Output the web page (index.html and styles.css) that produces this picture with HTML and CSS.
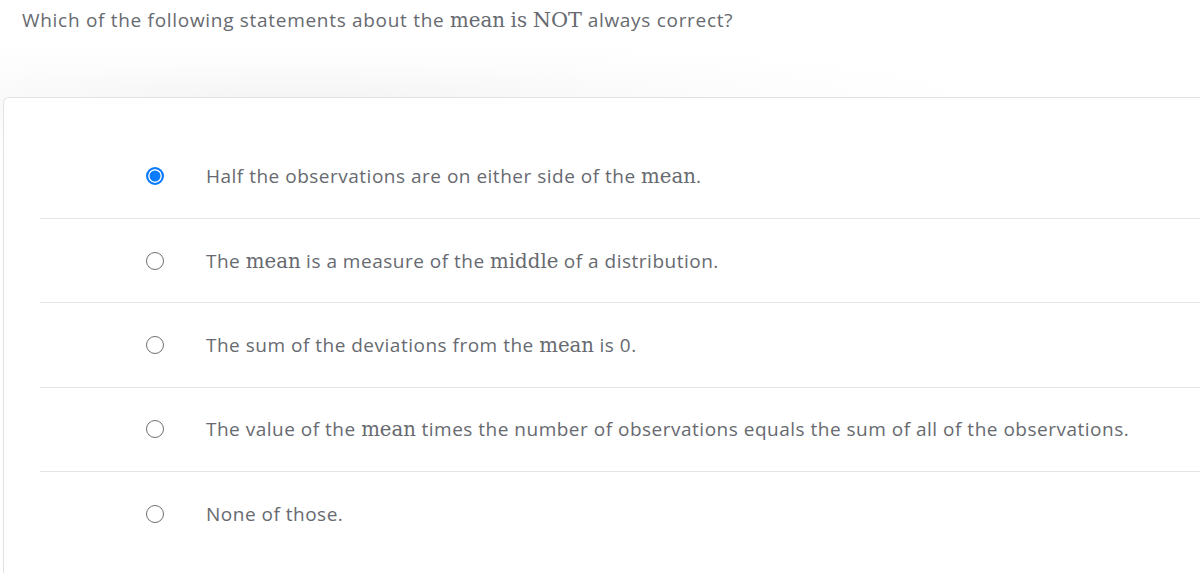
FILE: index.html
```html
<!DOCTYPE html>
<html>
<head>
<meta charset="utf-8">
<link rel="stylesheet" href="styles.css">
</head>
<body>
<div class="page">
  <div class="question">Which of the following statements about the <span class="m">mean</span> <span class="m">is</span> <span class="m big">NOT</span> always correct?</div>
  <div class="card">
    <ul class="options">
      <li class="opt"><span class="radio checked"></span><span class="label">Half the observations are on either side of the <span class="m">mean</span>.</span></li>
      <li class="opt"><span class="radio"></span><span class="label">The <span class="m">mean</span> is a measure of the <span class="m">middle</span> of a distribution.</span></li>
      <li class="opt"><span class="radio"></span><span class="label">The sum of the deviations from the <span class="m">mean</span> is 0.</span></li>
      <li class="opt"><span class="radio"></span><span class="label">The value of the <span class="m">mean</span> times the number of observations equals the sum of all of the observations.</span></li>
      <li class="opt"><span class="radio"></span><span class="label">None of those.</span></li>
    </ul>
  </div>
</div>
</body>
</html>
```

FILE: styles.css
```css
html, body {
  margin: 0;
  padding: 0;
  background: #ffffff;
}
.page {
  width: 1200px;
  height: 573px;
  overflow: hidden;
  font-family: "Open Sans", "Noto Sans", sans-serif;
  color: #676a70;
  background:
    radial-gradient(ellipse 700px 60px at 300px 100px, #f4f4f4 0%, rgba(250,250,250,0.6) 60%, rgba(255,255,255,0) 100%);
}
.question {
  padding: 6px 0 0 22px;
  height: 97px;
  box-sizing: border-box;
  font-size: 19px;
  letter-spacing: 0.7px;
  line-height: 28px;
}
.m {
  font-family: "DejaVu Serif", "Liberation Serif", serif;
  font-size: 1.04em;
  letter-spacing: 0;
}
.m.big {
  font-size: 1.1em;
}
.card {
  margin-left: 3px;
  border: 1px solid #e2e2e2;
  border-right: none;
  border-radius: 6px 0 0 0;
  background: #fff;
  height: 600px;
  padding-top: 36.5px;
  box-sizing: border-box;
}
.options {
  list-style: none;
  margin: 0 0 0 36px;
  padding: 0;
}
.opt {
  display: flex;
  align-items: center;
  height: 84.4px;
  box-sizing: border-box;
  border-bottom: 1.5px solid #e4e4e4;
  font-size: 19px;
  letter-spacing: 0.5px;
}
.opt:last-child {
  border-bottom: none;
}
.radio {
  width: 18px;
  height: 18px;
  border: 1.5px solid #707070;
  border-radius: 50%;
  box-sizing: border-box;
  margin-left: 106px;
  margin-right: 42px;
  flex: none;
  background: #fff;
}
.radio.checked {
  border: 2px solid #0a7aff;
  box-shadow: inset 0 0 0 1.5px #fff;
  background: #0a7aff;
}
```
